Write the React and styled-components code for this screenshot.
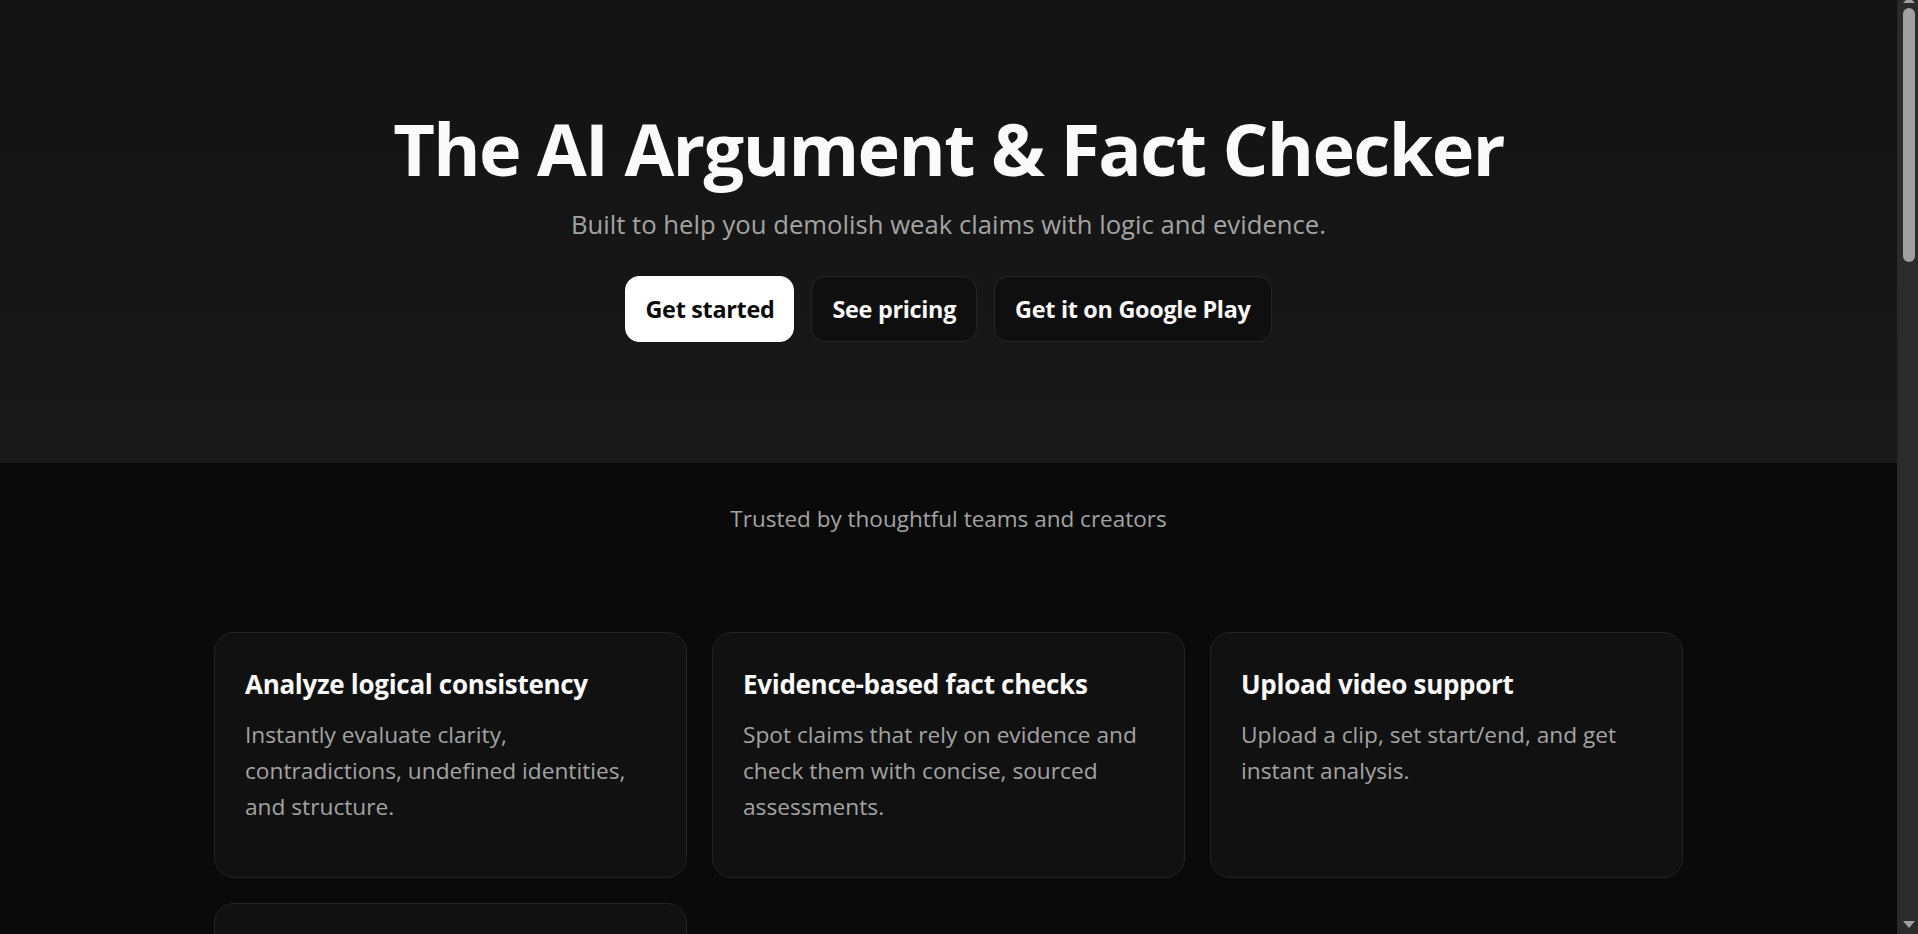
import styled, { createGlobalStyle } from 'styled-components'

const features = [
  {
    title: 'Analyze logical consistency',
    text: 'Instantly evaluate clarity, contradictions, undefined identities, and structure.',
  },
  {
    title: 'Evidence-based fact checks',
    text: 'Spot claims that rely on evidence and check them with concise, sourced assessments.',
  },
  {
    title: 'Upload video support',
    text: 'Upload a clip, set start/end, and get instant analysis.',
  },
  {
    title: 'Shareable reports',
    text: 'Export a clean summary of every argument and send it to anyone in one click.',
  },
];

const steps = [
  { title: 'Paste or upload', text: 'Drop in text, a link, or a video clip you want to examine.' },
  { title: 'Let the AI work', text: 'Claims are split out, checked for logic and matched to evidence.' },
  { title: 'Read the verdict', text: 'Get a clear breakdown with scores, sources and suggested rebuttals.' },
];

const faqs = [
  'Is there a free plan?',
  'Which sources are used for fact checks?',
  'Can I analyze videos from any platform?',
  'How accurate are the results?',
];

const GlobalStyle = createGlobalStyle`
  :root {
    color-scheme: dark;
  }
  html, body {
    margin: 0;
    padding: 0;
    background: #0a0a0a;
  }
  body {
    font-family: 'Open Sans', 'Noto Sans', 'Liberation Sans', sans-serif;
    color: #fafafa;
  }
  * {
    box-sizing: border-box;
  }
`;

const Page = styled.div`
  display: flex;
  flex-direction: column;
  min-height: 100vh;
  margin-right: 21px;
`;

// the window's own scrollbar, as it shows in the screenshot
const ScrollTrack = styled.div`
  position: fixed;
  top: 0;
  right: 0;
  bottom: 0;
  width: 21px;
  background: #2b2b2b;
  border-left: 1px solid #262626;
`;

const ScrollThumb = styled.div`
  position: absolute;
  top: 8px;
  left: 5px;
  width: 12px;
  height: 254px;
  border-radius: 6px;
  background: #a0a0a0;
`;

const ScrollArrow = styled.div`
  position: absolute;
  left: 5px;
  width: 0;
  height: 0;
  border-left: 6px solid transparent;
  border-right: 6px solid transparent;
  ${props => (props.$up
    ? 'top: -3px; border-bottom: 6px solid #a0a0a0;'
    : 'bottom: 6px; border-top: 7px solid #a0a0a0;')}
`;

const Hero = styled.section`
  display: flex;
  flex-direction: column;
  align-items: center;
  padding: 109px 24px 121px;
  background: linear-gradient(180deg, #131313 0%, #161616 55%, #181818 100%);
`;

const Title = styled.h1`
  margin: 0;
  font-size: 72px;
  line-height: 1.1;
  font-weight: 700;
  letter-spacing: -1.6px;
  color: #fafafa;
`;

const Subtitle = styled.p`
  margin: 18px 0 0;
  font-size: 25.7px;
  line-height: 1.5;
  color: #a3a3a3;
`;

const ButtonRow = styled.div`
  display: flex;
  gap: 17px;
  margin-top: 31px;
`;

const Button = styled.a`
  display: flex;
  align-items: center;
  justify-content: center;
  height: 66px;
  padding: 0 ${props => (props.$primary ? '19px' : '20px')};
  border-radius: 14px;
  font-size: 23.4px;
  font-weight: 700;
  letter-spacing: -0.3px;
  text-decoration: none;
  cursor: pointer;
  background: ${props => (props.$primary ? '#ffffff' : '#0f0f0f')};
  color: ${props => (props.$primary ? '#0a0a0a' : '#fafafa')};
  border: 1px solid ${props => (props.$primary ? '#ffffff' : '#262626')};
`;

const Section = styled.section`
  display: flex;
  flex-direction: column;
  align-items: center;
  padding: ${props => props.$padding || '0 24px'};
`;

const Trusted = styled.p`
  margin: 0;
  font-size: 22.5px;
  line-height: 1.5;
  color: #a3a3a3;
`;

const Grid = styled.div`
  display: grid;
  grid-template-columns: repeat(3, 1fr);
  gap: 25px;
  width: 1469px;
  margin-top: ${props => props.$top || '0'};
`;

const Card = styled.div`
  display: flex;
  flex-direction: column;
  padding: 35px 30px 52px;
  border-radius: 20px;
  border: 1px solid #242424;
  background: #111111;
`;

const CardTitle = styled.h3`
  margin: 0;
  font-size: 26px;
  line-height: 1.3;
  font-weight: 700;
  letter-spacing: -0.3px;
  color: #fafafa;
`;

const CardText = styled.p`
  margin: 15px 0 0;
  font-size: 22.7px;
  line-height: 36px;
  color: #a3a3a3;
`;

const SectionTitle = styled.h2`
  margin: 0;
  font-size: 44px;
  line-height: 1.2;
  font-weight: 700;
  color: #fafafa;
`;

const SectionLead = styled.p`
  margin: 14px 0 0;
  font-size: 22px;
  line-height: 1.5;
  color: #a3a3a3;
`;

const StepNumber = styled.div`
  display: flex;
  align-items: center;
  justify-content: center;
  width: 44px;
  height: 44px;
  margin-bottom: 20px;
  border-radius: 12px;
  background: #1c1c1c;
  border: 1px solid #2a2a2a;
  font-size: 20px;
  font-weight: 700;
`;

const FaqList = styled.div`
  display: flex;
  flex-direction: column;
  gap: 16px;
  width: 980px;
  margin-top: 48px;
`;

const FaqItem = styled.div`
  display: flex;
  justify-content: space-between;
  align-items: center;
  padding: 26px 30px;
  border-radius: 16px;
  border: 1px solid #242424;
  background: #111111;
  font-size: 21px;
  font-weight: 600;
`;

const Footer = styled.footer`
  display: flex;
  justify-content: space-between;
  align-items: center;
  margin-top: auto;
  padding: 40px 214px;
  border-top: 1px solid #1f1f1f;
  font-size: 17px;
  color: #737373;
`;

const FooterLinks = styled.div`
  display: flex;
  gap: 28px;
`;

function App() {
  return (
    <Page>
      <GlobalStyle />
      <Hero>
        <Title>The AI Argument &amp; Fact Checker</Title>
        <Subtitle>Built to help you demolish weak claims with logic and evidence.</Subtitle>
        <ButtonRow>
          <Button $primary>Get started</Button>
          <Button>See pricing</Button>
          <Button>Get it on Google Play</Button>
        </ButtonRow>
      </Hero>

      <Section $padding="39px 24px 0">
        <Trusted>Trusted by thoughtful teams and creators</Trusted>
        <Grid $top="97px">
          {features.map(f => (
            <Card key={f.title}>
              <CardTitle>{f.title}</CardTitle>
              <CardText>{f.text}</CardText>
            </Card>
          ))}
        </Grid>
      </Section>

      <Section $padding="160px 24px 0">
        <SectionTitle>How it works</SectionTitle>
        <SectionLead>Three steps from a messy claim to a clear verdict.</SectionLead>
        <Grid $top="56px">
          {steps.map((s, i) => (
            <Card key={s.title}>
              <StepNumber>{i + 1}</StepNumber>
              <CardTitle>{s.title}</CardTitle>
              <CardText>{s.text}</CardText>
            </Card>
          ))}
        </Grid>
      </Section>

      <Section $padding="160px 24px 180px">
        <SectionTitle>Frequently asked questions</SectionTitle>
        <FaqList>
          {faqs.map(q => (
            <FaqItem key={q}>
              <span>{q}</span>
              <span>+</span>
            </FaqItem>
          ))}
        </FaqList>
      </Section>

      <Footer>
        <span>© 2025 AI Argument &amp; Fact Checker</span>
        <FooterLinks>
          <span>Privacy</span>
          <span>Terms</span>
          <span>Contact</span>
        </FooterLinks>
      </Footer>

      <ScrollTrack>
        <ScrollArrow $up />
        <ScrollThumb />
        <ScrollArrow />
      </ScrollTrack>
    </Page>
  )
}

export default App
